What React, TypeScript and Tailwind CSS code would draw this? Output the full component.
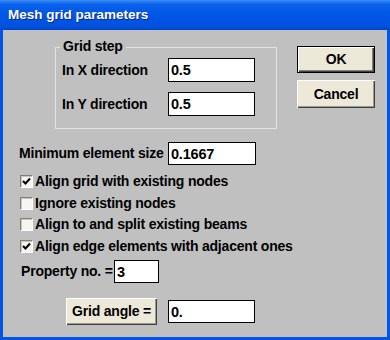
import React from "react"

const font = { fontFamily: '"Liberation Sans", Arial, sans-serif' }

function Field({ value, w, h = 23 }: { value: string; w: number; h?: number }) {
  return (
    <input
      readOnly
      value={value}
      style={{ width: w, height: h }}
      className="border border-black bg-white pl-[2px] text-[14.5px] font-bold tracking-[-0.2px] text-black outline-none"
    />
  )
}

function Check({ checked, label }: { checked: boolean; label: string }) {
  return (
    <div className="flex h-[21.5px] items-center">
      <div className="flex h-[13px] w-[13px] items-center justify-center border border-t-[#7f7f7f] border-l-[#7f7f7f] border-r-white border-b-white bg-[#f6f5f0] shadow-[inset_1px_1px_#c8c6bc]">
        {checked && (
          <svg width="9" height="9" viewBox="0 0 9 9">
            <path d="M1 4 L3.5 6.5 L8 1.5" stroke="black" strokeWidth="2" fill="none" />
          </svg>
        )}
      </div>
      <span className="ml-[2px]">{label}</span>
    </div>
  )
}

function Btn({ label, w, h, isDefault }: { label: string; w: number; h: number; isDefault?: boolean }) {
  return (
    <div
      style={{ width: w, height: h }}
      className={
        "flex items-center justify-center bg-[#ece9d8] " +
        (isDefault
          ? "border border-black shadow-[inset_1px_1px_#fff,inset_-1px_-1px_#404040,inset_-2px_-2px_#808080]"
          : "shadow-[inset_1px_1px_#fff,inset_-1px_-1px_#404040,inset_-2px_-2px_#9d9a8c]")
      }
    >
      {label}
    </div>
  )
}

export default function App() {
  return (
    <div style={font} className="flex h-[340px] w-[390px] flex-col bg-[#0055e5] text-[14px] font-bold tracking-[-0.2px] text-black">
      {/* title bar */}
      <div className="flex h-[30px] shrink-0 items-center bg-[linear-gradient(to_bottom,#3d8ff6_0%,#0a61ea_14%,#0056e6_50%,#0052de_88%,#0044c8_100%)] pl-[8px]">
        <span className="text-[13.5px] tracking-normal text-white [text-shadow:1px_1px_#0a2a90]">Mesh grid parameters</span>
      </div>

      {/* body */}
      <div className="mx-[3px] mb-[3px] flex-1 bg-[#c0c0c0]">
        <div className="flex items-start pl-[52px] pt-[17px]">
          <div className="relative h-[82px] w-[222px] border border-[#e4e2da]">
            <span className="absolute left-[4px] top-[-10px] bg-[#c0c0c0] px-[3px] leading-[16px]">Grid step</span>
            <div className="flex flex-col gap-[10px] pl-[6px] pt-[10px]">
              <div className="flex items-center">
                <span className="w-[106px]">In X direction</span>
                <Field value="0.5" w={87} h={24} />
              </div>
              <div className="flex items-center">
                <span className="w-[106px]">In Y direction</span>
                <Field value="0.5" w={87} h={24} />
              </div>
            </div>
          </div>
          <div className="ml-[20px] mt-[-1px] flex flex-col gap-[7px]">
            <Btn label="OK" w={78} h={27} isDefault />
            <Btn label="Cancel" w={78} h={28} />
          </div>
        </div>

        <div className="mt-[13px] flex items-center pl-[16px]">
          <span className="w-[149px]">Minimum element size</span>
          <Field value="0.1667" w={88} />
        </div>

        <div className="mt-[6px] flex flex-col pl-[17px]">
          <Check checked label="Align grid with existing nodes" />
          <Check checked={false} label="Ignore existing nodes" />
          <Check checked={false} label="Align to and split existing beams" />
          <Check checked label="Align edge elements with adjacent ones" />
        </div>

        <div className="mt-[3px] flex items-center pl-[18px]">
          <span className="w-[93px]">Property no. =</span>
          <Field value="3" w={45} />
        </div>

        <div className="mt-[15px] flex items-center pl-[63px]">
          <Btn label="Grid angle =" w={91} h={27} />
          <div className="ml-[11px]">
            <Field value="0." w={87} />
          </div>
        </div>
      </div>
    </div>
  )
}
